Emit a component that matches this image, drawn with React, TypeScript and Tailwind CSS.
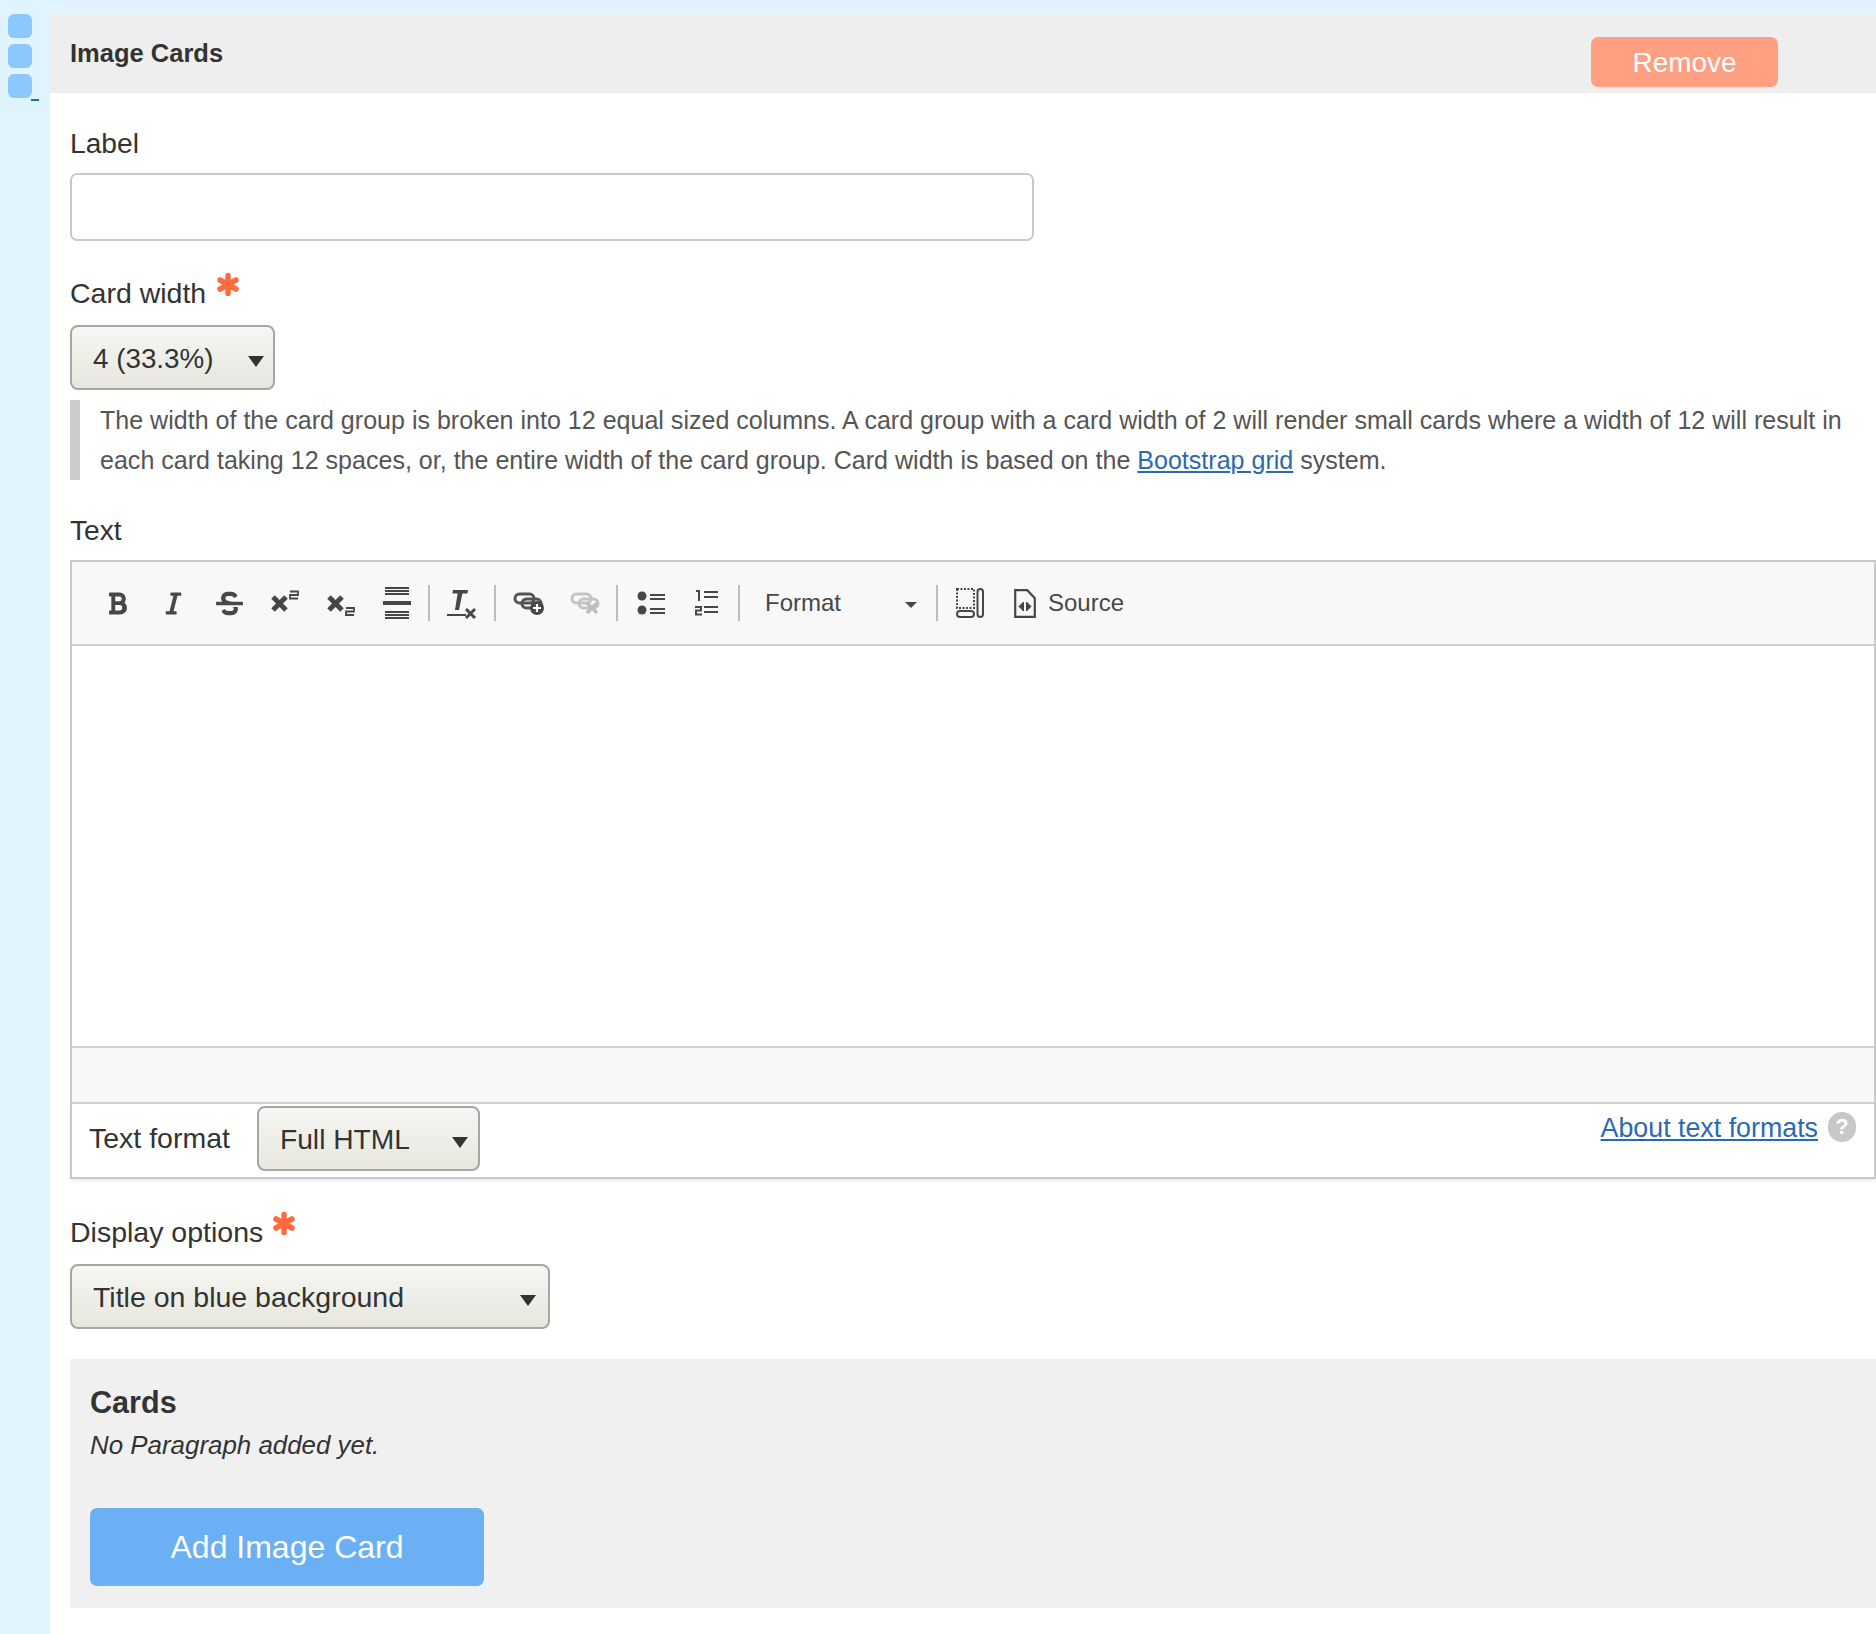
import { FaBold, FaItalic, FaStrikethrough } from 'react-icons/fa';

const FONT = "font-['Liberation_Sans',Arial,sans-serif]";

function Asterisk({ className }: { className?: string }) {
  return (
    <svg className={className} width="24" height="25" viewBox="0 0 24 25" fill="none" stroke="#ff6b3d" strokeWidth="5.5" strokeLinecap="round">
      <path d="M12 3.500v18M4 8l16 9M20 8L4 17" />
    </svg>
  );
}

function Caret({ className }: { className?: string }) {
  return <div className={`absolute top-1/2 w-0 h-0 border-x-[8.5px] border-x-transparent border-t-[11px] border-t-[#333] -translate-y-[2px] pointer-events-none ${className}`} />;
}

function FakeSelect({ value, width, caretClass, textClass }: { value: string; width: string; caretClass: string; textClass: string }) {
  return (
    <div className={`relative ${width}`}>
      <select
        defaultValue={value}
        className={`block w-full h-[65px] appearance-none rounded-[8px] border-2 border-[#a6a6a6] bg-gradient-to-b from-[#f6f6f3] to-[#e7e7df] pl-[21px] pt-[2px] text-[#333] outline-none ${textClass}`}
      >
        <option>{value}</option>
      </select>
      <Caret className={caretClass} />
    </div>
  );
}

function ToolIcon({ children }: { children: React.ReactNode }) {
  return <div className="w-[56px] h-[56px] flex items-center justify-center text-[#474747] shrink-0">{children}</div>;
}

function Sep() {
  return <div className="w-[2px] h-[36px] bg-[#bcbcbc] shrink-0" />;
}

function LinkGlyph({ color }: { color: string }) {
  return (
    <g fill="none" stroke={color} strokeWidth="3">
      <rect x="2" y="2" width="19" height="9" rx="4.500" />
      <rect x="9" y="7" width="19" height="9" rx="4.500" />
    </g>
  );
}

function ScriptIcon({ sub }: { sub?: boolean }) {
  return (
    <svg width="28" height="26" viewBox="0 0 28 26" fill="none" stroke="#474747">
      <path d="M2 7l13 13M15 7L2 20" strokeWidth="5" />
      <path d={sub ? 'M19 18h8v3.500h-8v3.500h8' : 'M19 1.500h8v3.500h-8v3.500h8'} strokeWidth="1.800" />
    </svg>
  );
}

function Toolbar() {
  return (
    <div className="flex items-center h-[84px] pl-[17px] bg-[#f8f8f8] border-b-2 border-[#d1d1d1]">
      <ToolIcon><FaBold size={25} /></ToolIcon>
      <ToolIcon><FaItalic size={25} /></ToolIcon>
      <ToolIcon><FaStrikethrough size={27} /></ToolIcon>
      <ToolIcon><ScriptIcon /></ToolIcon>
      <ToolIcon><ScriptIcon sub /></ToolIcon>
      <ToolIcon>
        <svg width="28" height="32" viewBox="0 0 28 32" fill="none" stroke="#474747">
          <path strokeWidth="2" d="M2 1h24M2 7h24M2 25h24M2 31h24M2 28h24M2 4h24" />
          <path strokeWidth="4" d="M0 16h28" />
        </svg>
      </ToolIcon>
      <div className="ml-[3px]"><Sep /></div>
      <div className="ml-[4px]">
        <ToolIcon>
          <svg width="30" height="32" viewBox="0 0 30 32" fill="#474747" className="mt-[3px]">
            <path d="M6 1h15l-.6 3.400h-5L12 21H8l2.600-16.600H5.400z" />
            <rect x="0" y="25" width="19" height="2" />
            <path d="M19 20l9 9M28 20l-9 9" stroke="#474747" strokeWidth="3" fill="none" />
          </svg>
        </ToolIcon>
      </div>
      <div className="ml-[4px]"><Sep /></div>
      <div className="ml-[5px]" />
      <ToolIcon>
        <svg width="32" height="23" viewBox="0 0 32 23">
          <LinkGlyph color="#555" />
          <circle cx="24" cy="16" r="7" fill="#474747" />
          <path d="M24 12v8M20 16h8" stroke="#fff" strokeWidth="2.200" />
        </svg>
      </ToolIcon>
      <ToolIcon>
        <svg width="30" height="23" viewBox="0 0 30 23">
          <LinkGlyph color="#c4c4c4" />
          <path d="M17 11l10 10M27 11L17 21" stroke="#bdbdbd" strokeWidth="3.400" fill="none" />
        </svg>
      </ToolIcon>
      <div className="ml-[3px]"><Sep /></div>
      <div className="ml-[5px]" />
      <ToolIcon>
        <svg width="28" height="24" viewBox="0 0 28 24" fill="#474747">
          <circle cx="5" cy="5" r="4.500" />
          <circle cx="5" cy="19" r="4.500" />
          <path d="M13 3h15v2H13zM13 7h15v2H13zM13 17h15v2H13zM13 21h15v2H13z" />
        </svg>
      </ToolIcon>
      <div className="-ml-[1px]">
        <ToolIcon>
          <svg width="24" height="28" viewBox="0 0 24 28" fill="none" stroke="#474747" strokeWidth="2">
            <path d="M2 2h3v10" />
            <path d="M1 18h6v3.500H2v4h6" />
            <path d="M10 3h14M10 8h14M10 18h14M10 23h14" />
          </svg>
        </ToolIcon>
      </div>
      <div className="ml-[4px]"><Sep /></div>
      <div className="relative w-[196px] h-[56px] flex items-center pl-[25px] text-[24px] text-[#474747] shrink-0">
        Format
        <div className="absolute right-[19px] top-[27px] w-0 h-0 border-x-[6px] border-x-transparent border-t-[6px] border-t-[#474747]" />
      </div>
      <Sep />
      <div className="ml-[18px] mr-[30px]">
        <svg width="28" height="30" viewBox="0 0 28 30" fill="none" stroke="#474747" className="block">
          <path d="M1 1h17v19H1z" strokeWidth="2" strokeDasharray="2 1.500" />
          <rect x="1" y="23" width="17" height="6" rx="3" strokeWidth="2" />
          <rect x="21.500" y="1" width="5.500" height="28" rx="2.700" strokeWidth="2" />
        </svg>
      </div>
      <svg width="22" height="29" viewBox="0 0 22 29" fill="none" stroke="#474747" className="shrink-0">
        <path d="M1.200 1.200h12l7.600 8v18.600H1.200z" strokeWidth="2.200" />
        <path d="M9.500 13l-4.500 4.500 4.500 4.500zM12.500 13l4.500 4.500-4.500 4.500z" fill="#474747" strokeWidth="1" />
      </svg>
      <span className="ml-[12px] text-[24px] text-[#474747]">Source</span>
    </div>
  );
}

export default function App() {
  return (
    <div className={`${FONT} flex w-full h-[1634px] pt-[13px] bg-[#e0f4ff] text-[#333] overflow-hidden`}>
      {/* drag handles */}
      <div className="relative w-[50px] shrink-0 flex flex-col gap-[6px] pt-[1px] pl-[8px]">
        <div className="w-[24px] h-[24px] rounded-[6px] bg-[#8cc8fb]" />
        <div className="w-[24px] h-[24px] rounded-[6px] bg-[#8cc8fb]" />
        <div className="w-[24px] h-[24px] rounded-[6px] bg-[#8cc8fb]" />
        <div className="absolute left-[31px] top-[86px] w-[8px] h-[2px] bg-[#2a6ab0]" />
      </div>

      <div className="flex-1 min-w-0 bg-white">
        <div className="flex justify-between h-[80px] bg-[#eee] pl-[20px] pr-[98px]">
          <h2 className="mt-[26px] text-[25.500px] leading-[29px] font-bold">Image Cards</h2>
          <button className="mt-[24px] w-[187px] h-[50px] pt-[2px] rounded-[7px] bg-[#ffa083] text-white text-[27.900px]">Remove</button>
        </div>

        <div className="pl-[20px]">
          <label className="block mt-[34px] text-[28.200px] leading-[32px]">Label</label>
          <input className="block mt-[14px] w-[964px] h-[68px] rounded-[7px] border-2 border-[#c9c9c9] bg-white" />

          <div className="flex items-start mt-[36px] h-[32px]">
            <label className="text-[28.500px] leading-[32px]">Card width</label>
            <Asterisk className="ml-[10px] -mt-[5px]" />
          </div>
          <div className="mt-[16px]">
            <FakeSelect value="4 (33.3%)" width="w-[205px]" caretClass="right-[11px]" textClass="text-[27.800px]" />
          </div>
          <div className="mt-[10px] h-[80px] border-l-[10px] border-[#ccc] pl-[20px] text-[25.050px] leading-[40px] text-[#555] whitespace-nowrap">
            The width of the card group is broken into 12 equal sized columns. A card group with a card width of 2 will render small cards where a width of 12 will result in
            <br />
            each card taking 12 spaces, or, the entire width of the card group. Card width is based on the{' '}
            <a className="text-[#2a6ab0] underline" href="#grid">Bootstrap grid</a> system.
          </div>

          <label className="block mt-[34px] text-[28.200px] leading-[32px]">Text</label>
          <div className="mt-[14px] border-2 border-[#c9c9c9] border-b-0">
            <Toolbar />
            <div className="h-[400px] bg-white" />
            <div className="h-[58px] bg-[#f8f8f8] border-y-2 border-[#d1d1d1]" />
          </div>
          <div className="flex justify-between h-[75px] border-x-2 border-b-2 border-[#c9c9c9] pl-[17px] pr-[18px] shadow-[0_2px_4px_rgba(0,0,0,0.08)]">
            <div className="flex items-start">
              <span className="mt-[18px] text-[28.500px] leading-[32px] mr-[27px]">Text format</span>
              <div className="mt-[2px]">
                <FakeSelect value="Full HTML" width="w-[223px]" caretClass="right-[12px]" textClass="text-[28.200px]" />
              </div>
            </div>
            <div className="flex items-start mt-[8px]">
              <a className="text-[#2a6ab0] underline text-[26.800px] leading-[32px]" href="#formats">About text formats</a>
              <div className="ml-[10px] w-[28px] h-[30px] rounded-full bg-[#c8c8c8] text-white font-bold text-[22px] leading-[30px] text-center">?</div>
            </div>
          </div>

          <div className="flex items-start mt-[37px] h-[32px]">
            <label className="text-[28.500px] leading-[32px]">Display options</label>
            <Asterisk className="ml-[9px] -mt-[5px]" />
          </div>
          <div className="mt-[16px]">
            <FakeSelect value="Title on blue background" width="w-[480px]" caretClass="right-[14px]" textClass="text-[28.500px]" />
          </div>

          <div className="mt-[30px] h-[249px] bg-[#f0f0f0] pl-[20px]">
            <h3 className="pt-[25px] text-[30.600px] leading-[36px] font-bold">Cards</h3>
            <p className="mt-[10px] text-[25.900px] leading-[30px] italic">No Paragraph added yet.</p>
            <button className="block mt-[48px] w-[394px] h-[78px] rounded-[7px] bg-[#6bb0f5] text-white text-[32px]">Add Image Card</button>
          </div>
        </div>
      </div>
    </div>
  );
}
